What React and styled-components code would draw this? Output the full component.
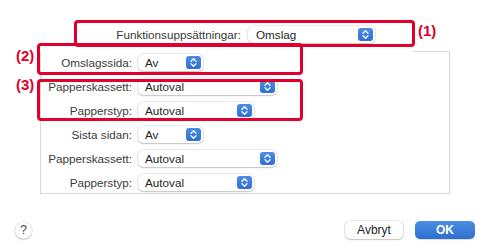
import React from "react";
import styled, { createGlobalStyle } from "styled-components";

const Global = createGlobalStyle`
  html, body { margin: 0; padding: 0; background: #ffffff; }
  body { font-family: "Liberation Sans", Arial, sans-serif; }
`;

const RED = "#e1002d";

const Page = styled.div`
  position: relative;
  width: 487px;
  height: 250px;
  padding-top: 26px;
  box-sizing: border-box;
  overflow: hidden;
  font-size: 11.7px;
  color: #3a3a3a;
`;

const TopRow = styled.div`
  display: flex;
  align-items: center;
  gap: 7px;
  height: 17px;
`;

const TopLabel = styled.div`
  width: 241px;
  text-align: right;
  white-space: nowrap;
`;

const Panel = styled.div`
  position: relative;
  margin: 8px 37px 0 40px;
  border: 1px solid #d9d9d9;
  border-top-color: transparent;
  padding: 2px 0 2px 0;
  display: flex;
  flex-direction: column;
  gap: 7px;
  &::before {
    content: "";
    position: absolute;
    top: -1px;
    right: -1px;
    width: 37px;
    height: 1px;
    background: #d9d9d9;
  }
`;

const Row = styled.div`
  display: flex;
  align-items: center;
  gap: 6px;
  height: 17px;
`;

const Label = styled.div`
  width: 91px;
  text-align: right;
  white-space: nowrap;
`;

const Popup = styled.div`
  box-sizing: border-box;
  width: ${(p) => p.$w}px;
  height: 17px;
  border-radius: 5px;
  background: #fff;
  box-shadow: 0 0 0 0.5px rgba(0, 0, 0, 0.16), 0 1px 1.5px rgba(0, 0, 0, 0.16);
  display: flex;
  align-items: center;
  padding-left: ${(p) => (p.$top ? 8 : 7)}px;
  padding-right: 2px;
  color: #262626;
  white-space: nowrap;
`;

const Value = styled.span`
  flex: 1;
`;

const Stepper = styled.div`
  width: 15px;
  height: 13px;
  border-radius: 3px;
  background: linear-gradient(#4b8de6, #2f6fd2);
  display: flex;
  align-items: center;
  justify-content: center;
`;

const Footer = styled.div`
  margin-top: 27px;
  height: 18px;
  display: flex;
  align-items: center;
  padding: 0 12px 0 15px;
`;

const Help = styled.div`
  width: 17px;
  height: 17px;
  border-radius: 50%;
  background: #fff;
  box-shadow: 0 0 0 0.5px rgba(0, 0, 0, 0.16), 0 1px 1.5px rgba(0, 0, 0, 0.2);
  display: flex;
  align-items: center;
  justify-content: center;
  font-size: 12px;
  color: #444;
`;

const Buttons = styled.div`
  margin-left: auto;
  display: flex;
  gap: 12px;
`;

const Button = styled.div`
  width: ${(p) => p.$w}px;
  height: 18px;
  border-radius: 5px;
  display: flex;
  align-items: center;
  justify-content: center;
  font-size: 12px;
  background: ${(p) => (p.$primary ? "linear-gradient(#4a8fe4, #2e6fcf)" : "#fff")};
  color: ${(p) => (p.$primary ? "#fff" : "#262626")};
  font-weight: ${(p) => (p.$primary ? 600 : 400)};
  box-shadow: ${(p) =>
    p.$primary
      ? "0 1px 1px rgba(0,0,0,0.15)"
      : "0 0 0 0.5px rgba(0,0,0,0.18), 0 1px 1.5px rgba(0,0,0,0.16)"};
`;

const Mark = styled.div`
  position: absolute;
  left: ${(p) => p.$x}px;
  top: ${(p) => p.$y}px;
  width: ${(p) => p.$w}px;
  height: ${(p) => p.$h}px;
  box-sizing: border-box;
  border: 3px solid ${RED};
  border-radius: 4px;
  pointer-events: none;
`;

const MarkLabel = styled.div`
  position: absolute;
  left: ${(p) => p.$x}px;
  top: ${(p) => p.$y}px;
  font-size: 15px;
  line-height: 15px;
  font-weight: 700;
  color: ${RED};
`;

const Chevrons = () => (
  <svg width="15" height="13" viewBox="0 0 15 13">
    <path d="M5 5.2 L7.5 2.8 L10 5.2" fill="none" stroke="#fff" strokeWidth="1.3" strokeLinecap="round" strokeLinejoin="round" />
    <path d="M5 7.8 L7.5 10.2 L10 7.8" fill="none" stroke="#fff" strokeWidth="1.3" strokeLinecap="round" strokeLinejoin="round" />
  </svg>
);

const Select = ({ value, w, top }) => (
  <Popup $w={w} $top={top}>
    <Value>{value}</Value>
    <Stepper>
      <Chevrons />
    </Stepper>
  </Popup>
);

const rows = [
  ["Omslagssida:", "Av", 65],
  ["Papperskassett:", "Autoval", 139],
  ["Papperstyp:", "Autoval", 116],
  ["Sista sidan:", "Av", 65],
  ["Papperskassett:", "Autoval", 139],
  ["Papperstyp:", "Autoval", 116],
];

export default function App() {
  return (
    <>
      <Global />
      <Page>
        <TopRow>
          <TopLabel>Funktionsuppsättningar:</TopLabel>
          <Select value="Omslag" w={127} top />
        </TopRow>
        <Panel>
          {rows.map(([l, v, w], i) => (
            <Row key={i}>
              <Label>{l}</Label>
              <Select value={v} w={w} />
            </Row>
          ))}
        </Panel>
        <Footer>
          <Help>?</Help>
          <Buttons>
            <Button $w={58}>Avbryt</Button>
            <Button $w={60} $primary>OK</Button>
          </Buttons>
        </Footer>

        <Mark $x={74} $y={20} $w={341} $h={27} />
        <Mark $x={37} $y={43} $w={266} $h={32} />
        <Mark $x={37} $y={79} $w={266} $h={42} />
        <MarkLabel $x={418} $y={23}>(1)</MarkLabel>
        <MarkLabel $x={16} $y={48}>(2)</MarkLabel>
        <MarkLabel $x={16} $y={77}>(3)</MarkLabel>
      </Page>
    </>
  );
}
